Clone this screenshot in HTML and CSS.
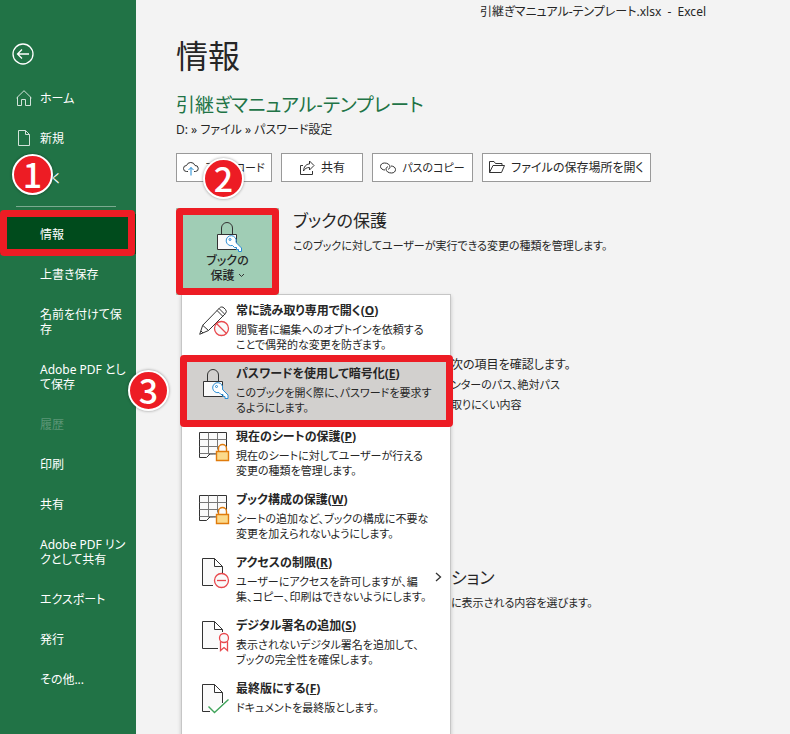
FILE: index.html
```html
<!DOCTYPE html>
<html lang="ja">

<head>
    <title>引継ぎマニュアル-テンプレート.xlsx - Excel</title>
    <meta charset="utf-8">
    <meta name="viewport" content="width=device-width, initial-scale=1">
    <link rel="stylesheet" href="styles.css">
</head>

<body>
    <div class="backstage">
        <nav class="sidebar">
            <button class="back" type="button" aria-label="戻る">
                <svg width="22" height="22" viewBox="0 0 22 22"><circle cx="11" cy="11" r="10"/><path d="M17 11H5.500M10 6.500L5.500 11l4.500 4.500"/></svg>
            </button>
            <a class="nav-item" href="#">
                <svg class="nav-icon" width="16" height="16" viewBox="0 0 16 16"><path d="M.5 8L8 .7 15.500 8M1.500 7v8.500h4V9.500h4v6h5V7"/></svg>ホーム</a>
            <a class="nav-item" href="#">
                <svg class="nav-icon" width="16" height="16" viewBox="0 0 16 16"><path d="M2.500.5h7l4 4v11h-11zM9.500.5v4h4"/></svg>新規</a>
            <a class="nav-item" href="#">開く<span class="badge badge-one">1</span></a>
            <hr class="divider">
            <a class="nav-item current marked" href="#">情報</a>
            <a class="nav-item" href="#">上書き保存</a>
            <a class="nav-item" href="#">名前を付けて保<br>存</a>
            <a class="nav-item" href="#">Adobe PDF とし<br>て保存</a>
            <a class="nav-item disabled" aria-disabled="true">履歴</a>
            <a class="nav-item" href="#">印刷</a>
            <a class="nav-item" href="#">共有</a>
            <a class="nav-item" href="#">Adobe PDF リン<br>クとして共有</a>
            <a class="nav-item" href="#">エクスポート</a>
            <a class="nav-item" href="#">発行</a>
            <a class="nav-item" href="#">その他...</a>
        </nav>

        <main class="content">
            <div class="titlebar">引継ぎマニュアル-テンプレート.xlsx&nbsp; -&nbsp; Excel</div>
            <h1>情報</h1>
            <h2 class="file-name">引継ぎマニュアル-テンプレート</h2>
            <p class="path">D: » ファイル » パスワード設定</p>

            <div class="toolbar">
                <button class="tool upload" type="button">
                    <svg width="16" height="16" viewBox="0 0 16 16"><path d="M5 11.500H3.500a3 3 0 0 1 0-6 4.500 4.500 0 0 1 8.500 0 3 3 0 0 1 .5 6H11"/><path class="blue" d="M8 15.500V7.500M5.500 10L8 7.500l2.500 2.500"/></svg>
                    アップロード
                    <span class="badge badge-two">2</span>
                </button>
                <button class="tool share" type="button">
                    <svg width="16" height="16" viewBox="0 0 16 16"><path d="M4 5.500H1.500v9h12V11"/><path d="M10.500 1l4.500 4.500-4.500 4.500V7.500C7.500 7.500 6 8.500 4.500 11c.2-4 2.500-7 6-7z"/></svg>
                    共有
                </button>
                <button class="tool copy" type="button">
                    <svg width="16" height="16" viewBox="0 0 16 16"><path d="M5 10C2.500 10 .5 8.500.5 6.500S2 3 4.500 3c3 0 5.500 1.500 5.500 4 0 1.200-.8 2-2 2.200"/><path d="M11 6c2.500 0 4.500 1.500 4.500 3.500S14 13 11.500 13C8.500 13 6 11.500 6 9c0-1.200.8-2 2-2.200"/></svg>
                    パスのコピー
                </button>
                <button class="tool open" type="button">
                    <svg width="16" height="16" viewBox="0 0 16 16"><path d="M.5 12.500V1.500h4.500l1.500 2h6.500v2M.5 12.500l3.500-7h11.500l-3 7z"/></svg>
                    ファイルの保存場所を開く
                </button>
            </div>

            <section class="protect">
                <div class="protect-anchor">
                    <button class="protect-button marked" type="button" aria-haspopup="menu" aria-expanded="true">
                        <svg width="28" height="32" viewBox="0 0 28 32">
                            <path class="lock" d="M7.500 13.500V7a5.500 5.500 0 0 1 11 0v6.500"/>
                            <path class="lock fill" d="M3.500 13.500h19v15h-19z"/>
                            <path class="key" d="M22.500 22l5 5v3.500h-3v-2h-2v-2h-2l-2-2a5 5 0 1 1 3.500-3.500z"/>
                            <circle class="key" cx="16" cy="18.500" r="1"/>
                        </svg>
                        <span>ブックの<br>保護 <svg class="caret" width="7" height="5" viewBox="0 0 7 5"><path d="M1 1l2.500 2.500L6 1"/></svg></span>
                    </button>

                    <div class="menu" role="menu">
                        <button class="menu-item" type="button" role="menuitem">
                            <svg class="menu-icon" width="32" height="32" viewBox="0 0 32 32">
                                <path class="ink" d="M.7 29.300l3-9L20.500 3a3 3 0 0 1 4.500 0l1.500 1.500a3 3 0 0 1 0 4L9.500 25.500zM3.700 20.300l5.800 5.200M18 5.500l5.800 5.800M20 3.500l5.800 5.800M2 26l2 2"/>
                                <circle class="red paper" cx="22.500" cy="23.500" r="7"/><path class="red" d="M17.500 18.500l10 10"/>
                            </svg>
                            <span class="menu-text"><b>常に読み取り専用で開く(<u>O</u>)</b><span>閲覧者に編集へのオプトインを依頼する<br>ことで偶発的な変更を防ぎます。</span></span>
                        </button>
                        <button class="menu-item selected marked" type="button" role="menuitem">
                            <svg class="menu-icon" width="32" height="32" viewBox="0 0 32 32">
                                <path class="ink" d="M8.500 13.500V7a5.500 5.500 0 0 1 11 0v6.500"/>
                                <path class="ink paper" d="M4.500 13.500h19v15h-19z"/>
                                <path class="key" d="M24 22l5 5v3.500h-3v-2h-2v-2h-2l-2-2a5 5 0 1 1 3.500-3.500z"/>
                                <circle class="key" cx="17.500" cy="18.500" r="1"/>
                            </svg>
                            <span class="menu-text"><b>パスワードを使用して暗号化(<u>E</u>)</b><span>このブックを開く際に、パスワードを要求す<br>るようにします。</span></span>
                            <span class="badge badge-three">3</span>
                        </button>
                        <button class="menu-item" type="button" role="menuitem">
                            <svg class="menu-icon" width="32" height="32" viewBox="0 0 32 32">
                                <path class="ink paper" d="M.5 1.500h27v21l-13 .5H11l-3.500 3.500h-7z"/>
                                <path class="grid" d="M.5 8.500h27M.5 15.500h27M.5 22.500h16M9.500 1.500v22M18.500 1.500v17"/>
                                <path class="gold paper" d="M19.500 20.500v-3a4 4 0 0 1 8 0v3"/><path class="gold body" d="M17.500 20.500h12v9h-12z"/>
                            </svg>
                            <span class="menu-text"><b>現在のシートの保護(<u>P</u>)</b><span>現在のシートに対してユーザーが行える<br>変更の種類を管理します。</span></span>
                        </button>
                        <button class="menu-item" type="button" role="menuitem">
                            <svg class="menu-icon" width="32" height="32" viewBox="0 0 32 32">
                                <path class="ink paper" d="M.5 1.500h27v21l-13 .5H11l-3.500 3.500h-7z"/>
                                <path class="grid" d="M.5 8.500h27M.5 15.500h27M.5 22.500h16M9.500 1.500v22M18.500 1.500v17"/>
                                <path class="gold paper" d="M19.500 20.500v-3a4 4 0 0 1 8 0v3"/><path class="gold body" d="M17.500 20.500h12v9h-12z"/>
                            </svg>
                            <span class="menu-text"><b>ブック構成の保護(<u>W</u>)</b><span>シートの追加など、ブックの構成に不要な<br>変更を加えられないようにします。</span></span>
                        </button>
                        <button class="menu-item" type="button" role="menuitem">
                            <svg class="menu-icon" width="32" height="32" viewBox="0 0 32 32">
                                <path class="ink paper" d="M14 28.500H3.500v-27h12l8 8V16M15.500 1.500v8h8"/>
                                <circle class="red paper" cx="22.500" cy="23.500" r="7"/><path class="red" d="M18 23.500h9"/>
                            </svg>
                            <span class="menu-text"><b>アクセスの制限(<u>R</u>)</b><span>ユーザーにアクセスを許可しますが、編<br>集、コピー、印刷はできないようにします。</span></span>
                            <svg class="submenu" width="7" height="10" viewBox="0 0 7 10"><path d="M1 1l4.500 4L1 9"/></svg>
                        </button>
                        <button class="menu-item" type="button" role="menuitem">
                            <svg class="menu-icon" width="32" height="32" viewBox="0 0 32 32">
                                <path class="ink paper" d="M19 28.500H3.500v-27h12l8 8V12M15.500 1.500v8h8"/>
                                <circle class="red paper" cx="25" cy="18" r="4.500"/><path class="red" d="M21.500 21.500v9l3.500-3 3.500 3v-9"/>
                            </svg>
                            <span class="menu-text"><b>デジタル署名の追加(<u>S</u>)</b><span>表示されないデジタル署名を追加して、<br>ブックの完全性を確保します。</span></span>
                        </button>
                        <button class="menu-item" type="button" role="menuitem">
                            <svg class="menu-icon" width="32" height="32" viewBox="0 0 32 32">
                                <path class="ink paper" d="M11 28.500H3.500v-27h12l8 8V20M15.500 1.500v8h8"/>
                                <path class="check" d="M9.500 23.500l6 6 14-13"/>
                            </svg>
                            <span class="menu-text"><b>最終版にする(<u>F</u>)</b><span>ドキュメントを最終版とします。</span></span>
                        </button>
                    </div>
                </div>
                <div class="protect-text">
                    <h3>ブックの保護</h3>
                    <p>このブックに対してユーザーが実行できる変更の種類を管理します。</p>
                </div>
            </section>

            <section class="inspect">
                <p>次の項目を確認します。</p>
                <ul>
                    <li>ンターのパス、絶対パス</li>
                    <li>取りにくい内容</li>
                </ul>
            </section>

            <section class="view-options">
                <h3>ション</h3>
                <p>に表示される内容を選びます。</p>
            </section>
        </main>
    </div>
</body>

</html>
```

FILE: styles.css
```css
* {
    box-sizing: border-box;
}

body {
    margin: 0;
    background: #f3f3f3;
    color: #262626;
    font-family: "Noto Sans", "Noto Sans CJK JP", sans-serif;
    font-size: 12px;
    line-height: 15px;
    font-feature-settings: "palt";
}

h1,
h2,
h3,
p,
ul {
    margin: 0;
    padding: 0;
    font-weight: 400;
}

button {
    font: inherit;
    font-feature-settings: inherit;
    color: inherit;
    cursor: pointer;
}

svg {
    fill: none;
    stroke: #333;
    flex: none;
}

.backstage {
    display: flex;
    min-height: 100vh;
    overflow: hidden;
}

/* red frame round a step */
.marked {
    position: relative;
}

.marked::after {
    content: "";
    position: absolute;
    inset: 0;
    border: 7px solid #ed1c24;
    border-radius: 4px;
}

.badge {
    position: absolute;
    z-index: 5;
    width: 41px;
    height: 41px;
    border: 2px solid #fff;
    border-radius: 50%;
    background: #ed1c24;
    box-shadow: 0 0 3px rgba(0, 0, 0, .4);
    color: #fff;
    font-family: "Noto Sans CJK JP", sans-serif;
    font-size: 34px;
    font-weight: 500;
    line-height: 35px;
    text-align: center;
}

/* sidebar */
.sidebar {
    flex: none;
    width: 136px;
    padding-top: 43px;
    background: #217346;
}

.back {
    display: block;
    margin: 0 0 13px 12px;
    padding: 0;
    border: 0;
    background: none;
}

.back svg {
    display: block;
    stroke: #fff;
    stroke-width: 1.3;
}

.nav-item {
    display: block;
    position: relative;
    padding: 13px 0 12px 40px;
    color: #fff;
    text-decoration: none;
    white-space: nowrap;
}

.nav-icon {
    position: absolute;
    left: 16px;
    top: 12px;
    stroke: #d3e3da;
}

.divider {
    width: 100px;
    height: 1px;
    margin: 8px 0 7px 16px;
    border: 0;
    background: #7aab90;
}

.current {
    background: #004b1c;
}

.current::after {
    inset: -4px 1px -2px 0;
}

.disabled {
    color: #5c9676;
}

.badge-one {
    left: 12px;
    top: -4px;
}

/* content */
.content {
    flex: 1;
    min-width: 0;
    padding: 0 0 0 40px;
}

.titlebar {
    padding: 4px 84px 0 0;
    text-align: right;
}

h1 {
    margin-top: 13px;
    font-size: 32px;
    line-height: 48px;
}

.file-name {
    margin-top: 11px;
    color: #217346;
    font-size: 19px;
    line-height: 28px;
}

.path {
    margin-top: 3px;
}

.toolbar {
    display: flex;
    gap: 9px;
    margin-top: 16px;
}

.tool {
    display: flex;
    align-items: center;
    justify-content: center;
    gap: 6px;
    position: relative;
    height: 29px;
    padding: 0;
    border: 1px solid #999;
    background: #fff;
    white-space: nowrap;
}

.tool .blue {
    stroke: #1e8bd4;
}

.upload {
    width: 96px;
}

.share {
    width: 82px;
}

.copy {
    width: 101px;
}

.open {
    width: 169px;
}

.upload,
.copy {
    font-size: 11px;
}

.badge-two {
    left: 26px;
    top: 4px;
}

/* protect workbook */
.protect {
    display: flex;
    gap: 14px;
    margin-top: 26px;
}

.protect-anchor {
    position: relative;
    flex: none;
}

.protect-button {
    display: flex;
    flex-direction: column;
    align-items: center;
    z-index: 2;
    width: 103px;
    height: 87px;
    padding: 13px 0 0;
    border: 0;
    background: #a0cdb5;
    font-weight: 500;
}

.fill,
.paper {
    fill: #fafafa;
}

.key {
    fill: #fff;
    stroke: #2a8dd4;
}

.caret {
    vertical-align: 2px;
}

h3 {
    font-size: 17px;
    line-height: 26px;
}

.protect-text p {
    margin-top: 4px;
    font-size: 11px;
}

.menu {
    position: absolute;
    z-index: 1;
    top: 86px;
    left: 5px;
    width: 270px;
    padding: 1px 0 12px;
    border: 1px solid #c6c6c6;
    background: #fff;
    box-shadow: 0 2px 4px rgba(0, 0, 0, .2);
}

.menu-item {
    display: flex;
    gap: 5px;
    position: relative;
    width: 100%;
    min-height: 63px;
    padding: 7px 0 7px 17px;
    border: 0;
    background: none;
    text-align: left;
    white-space: nowrap;
}

.menu-icon {
    margin-top: 2px;
}

.menu-text {
    display: flex;
    flex-direction: column;
    gap: 3px;
    font-size: 11px;
}

.menu-text b {
    font-size: 12px;
    line-height: 16px;
    font-weight: 700;
}

.red {
    stroke: #e8484d;
    stroke-width: 1.3;
}

.grid {
    stroke: #777;
}

.gold {
    stroke: #e07b0c;
    stroke-width: 1.4;
}

.gold.body {
    fill: #fbd98a;
}

.check {
    stroke: #41a45b;
    stroke-width: 1.4;
}

.selected {
    z-index: 2;
    background: #d2d0ce;
}

.selected::after {
    inset: -4px -3px -5px -2px;
}

.badge-three {
    left: -54px;
    top: 11px;
}

.submenu {
    position: absolute;
    right: 8px;
    top: 24px;
    stroke-width: 1.3;
}

/* sections partly under the menu */
.inspect,
.view-options {
    padding-left: 275px;
}

.inspect {
    margin-top: 62px;
}

.inspect ul {
    list-style: none;
    font-size: 11px;
}

.inspect li {
    margin-top: 5px;
}

.view-options {
    margin-top: 153px;
}

.view-options p {
    margin-top: 4px;
    font-size: 11px;
}
```
